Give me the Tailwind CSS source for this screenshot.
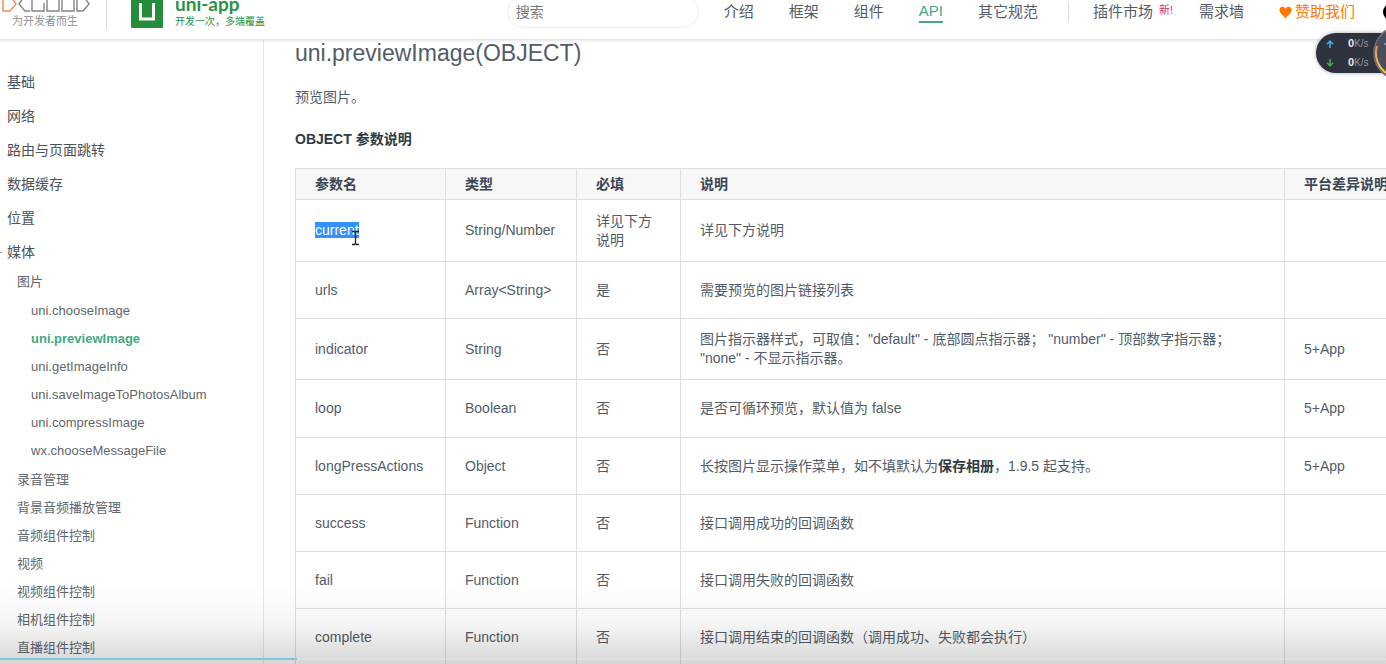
<!DOCTYPE html>
<html lang="zh-CN">
<head>
<meta charset="utf-8">
<title>uni.previewImage(OBJECT)</title>
<script src="https://cdn.jsdelivr.net/npm/@tailwindcss/browser@4"></script>
</head>
<body class="relative flex h-screen flex-col overflow-hidden bg-white font-['Liberation_Sans','Noto_Sans_CJK_SC',sans-serif] text-sm text-[#525c69]">

<header class="relative z-10 -mt-4 flex h-14 shrink-0 items-center border-b border-[#e6e6e6] bg-white pt-px shadow-[0_1px_3px_rgba(0,0,0,0.1)]">
  <a href="#" class="flex w-[107px] flex-col border-r border-[#d8d8d8] text-[11px] leading-[18px] text-[#8f8f8f]" aria-label="DCloud">
    <svg class="ml-[2px] h-[18px] w-[90px]" viewBox="0 0 90 18" fill="none" stroke="#858585" stroke-width="1.400">
      <path d="M1 1h7l6 9-6 7H1z" stroke="#f08a4b"/>
      <path d="M28 1h-5l-6 9 6 7h5M30 1v16h12V9M45 1h12v16H45zM60 1v16h12V1M75 1v16h6l6-7-6-9z"/>
    </svg>
    <span class="pl-3 whitespace-nowrap">为开发者而生</span>
  </a>
  <a href="#" class="ml-6 flex items-center gap-3 text-[#2a9245]">
    <svg class="size-8" viewBox="0 0 32 32"><rect width="32" height="32" rx="1" fill="#238d3a"/><path d="M9.500 7v16h13V7" fill="none" stroke="#fff" stroke-width="3"/></svg>
    <span class="flex flex-col">
      <b class="font-['Lato','Open_Sans',sans-serif] text-[19px] leading-5">uni-app</b>
      <span class="text-[10px] leading-4 whitespace-nowrap">开发一次，多端覆盖</span>
    </span>
  </a>
  <input type="search" aria-label="搜索" placeholder="搜索" class="ml-auto h-8 w-[192px] rounded-full border border-[#eeeeee] bg-white px-2 text-sm text-[#555] placeholder:text-[#777]">
  <nav class="ml-[25px] flex shrink-0 items-center gap-[35px] pr-[31px] text-[15px] leading-5 whitespace-nowrap text-[#525c69]">
    <a href="#">介绍</a>
    <a href="#">框架</a>
    <a href="#">组件</a>
    <a href="#" class="border-b-2 border-[#42a983] leading-5 text-[#42a983]">API</a>
    <a href="#">其它规范</a>
    <span class="-ml-[5px] h-5 w-px bg-[#dddddd]"></span>
    <a href="#" class="-ml-[11px] flex gap-[6px]">插件市场<sup class="top-0 text-[11px] leading-4 text-[#d8345f]">新!</sup></a>
    <a href="#" class="-ml-[9px]">需求墙</a>
    <a href="#" class="flex items-center gap-[3px] text-[#ff7700]">
      <svg class="h-[13px] w-[13px]" viewBox="0 0 13 13" fill="#ff7700"><path d="M6.500 12.500C5.500 10.500.5 7.500.5 4 .5 2 1.800.8 3.500.8c1.300 0 2.400.7 3 2 .6-1.300 1.700-2 3-2 1.700 0 3 1.200 3 3.200 0 3.500-5 6.500-6 8.500z"/></svg>赞助我们</a>
  </nav>
</header>
<div class="absolute top-[3px] -right-[15px] z-10 size-[18px] rounded-full bg-black"></div>

<div class="flex min-h-0 flex-1">
  <aside class="w-[264px] shrink-0 overflow-hidden border-r border-[#e8e8e8] pt-[25px] text-[#4b5258]">
    <ul class="leading-[34px]">
      <li><a href="#" class="block pl-[7px]">基础</a></li>
      <li><a href="#" class="block pl-[7px]">网络</a></li>
      <li><a href="#" class="block pl-[7px]">路由与页面跳转</a></li>
      <li><a href="#" class="block pl-[7px]">数据缓存</a></li>
      <li><a href="#" class="block pl-[7px]">位置</a></li>
      <li>
        <a href="#" class="flex items-center gap-[5px]"><span class="h-px w-[2px] bg-[#999]"></span>媒体</a>
        <ul class="-mt-px pl-[17px] text-[13px] leading-7 text-[#5f666d]">
          <li><a href="#">图片</a>
            <ul class="py-px pl-[14px]">
              <li><a href="#">uni.chooseImage</a></li>
              <li><a href="#" class="font-bold text-[#42a983]">uni.previewImage</a></li>
              <li><a href="#">uni.getImageInfo</a></li>
              <li><a href="#">uni.saveImageToPhotosAlbum</a></li>
              <li><a href="#">uni.compressImage</a></li>
              <li><a href="#">wx.chooseMessageFile</a></li>
            </ul>
          </li>
          <li><a href="#">录音管理</a></li>
          <li><a href="#">背景音频播放管理</a></li>
          <li><a href="#">音频组件控制</a></li>
          <li><a href="#">视频</a></li>
          <li><a href="#">视频组件控制</a></li>
          <li><a href="#">相机组件控制</a></li>
          <li><a href="#">直播组件控制</a></li>
        </ul>
      </li>
    </ul>
  </aside>

  <main class="min-w-0 flex-1 overflow-hidden pl-[31px]">
    <h1 class="text-[23px] leading-[26px]">uni.previewImage(OBJECT)</h1>
    <p class="mt-[21px] leading-[20px]">预览图片。</p>
    <h2 class="mt-[22px] font-bold text-[#2f3a47]">OBJECT 参数说明</h2>
    <div class="-mr-6 mt-[19px]">
      <table class="w-full table-fixed border-collapse text-left leading-[19px] [&_td]:border [&_td]:border-[#dfdfdf] [&_td]:px-[19px] [&_th]:border [&_th]:border-[#dfdfdf] [&_th]:px-[19px] [&_th]:text-[#3a4554]">
        <colgroup><col class="w-[150px]"><col class="w-[131px]"><col class="w-[104px]"><col><col class="w-[125px]"></colgroup>
        <thead class="bg-[#f7f7f7]">
          <tr class="h-[31px]"><th>参数名</th><th>类型</th><th>必填</th><th>说明</th><th class="whitespace-nowrap">平台差异说明</th></tr>
        </thead>
        <tbody>
          <tr class="h-[62px]"><td><mark class="bg-[#3390ff] text-white">current</mark></td><td>String/Number</td><td>详见下方说明</td><td>详见下方说明</td><td></td></tr>
          <tr class="h-[57px]"><td>urls</td><td>Array&lt;String&gt;</td><td>是</td><td>需要预览的图片链接列表</td><td></td></tr>
          <tr class="h-[61px]"><td>indicator</td><td>String</td><td>否</td><td>图片指示器样式，可取值："default" - 底部圆点指示器； "number" - 顶部数字指示器；<br>"none" - 不显示指示器。</td><td>5+App</td></tr>
          <tr class="h-[58px]"><td>loop</td><td>Boolean</td><td>否</td><td>是否可循环预览，默认值为 false</td><td>5+App</td></tr>
          <tr class="h-[57px]"><td>longPressActions</td><td>Object</td><td>否</td><td>长按图片显示操作菜单，如不填默认为<strong class="text-[#2f3a47]">保存相册</strong>，1.9.5 起支持。</td><td>5+App</td></tr>
          <tr class="h-[57px]"><td>success</td><td>Function</td><td>否</td><td>接口调用成功的回调函数</td><td></td></tr>
          <tr class="h-[57px]"><td>fail</td><td>Function</td><td>否</td><td>接口调用失败的回调函数</td><td></td></tr>
          <tr class="h-[57px]"><td>complete</td><td>Function</td><td>否</td><td>接口调用结束的回调函数（调用成功、失败都会执行）</td><td></td></tr>
        </tbody>
      </table>
    </div>
  </main>
</div>

<!-- text cursor over the selected word -->
<svg class="absolute top-[230px] left-[351px] h-4 w-[9px]" viewBox="0 0 9 16" fill="none" stroke="#222" stroke-width="1.300"><path d="M1 1.500h2.500l1 1 1-1H8M4.500 2.500v11M1 14.500h2.500l1-1 1 1H8"/></svg>

<!-- network speed widget -->
<div class="absolute top-[33px] right-0 z-20 flex h-10 w-[70px] flex-col justify-center rounded-l-full bg-[#2d323d] pl-[10px] text-[11px] leading-[19px] text-[#9298a3] shadow-[0_0_4px_rgba(0,0,0,0.35)]">
  <div class="flex items-center gap-[14px]"><svg class="size-2" viewBox="0 0 8 8" fill="none" stroke="#3fa9f0" stroke-width="1.600"><path d="M4 8V1.500M1 4.200l3-3 3 3"/></svg><span><b class="text-[#e8e8e8]">0</b><span class="text-[10px]">K/s</span></span></div>
  <div class="flex items-center gap-[14px]"><svg class="size-2" viewBox="0 0 8 8" fill="none" stroke="#35b04a" stroke-width="1.600"><path d="M4 0v6.500M1 3.800l3 3 3-3"/></svg><span><b class="text-[#e8e8e8]">0</b><span class="text-[10px]">K/s</span></span></div>
</div>
<svg class="absolute top-[24px] right-0 z-20 h-[58px] w-[13px]" viewBox="0 0 13 58">
  <defs><linearGradient id="arc" x1="0" y1="0" x2="0" y2="1"><stop offset="0" stop-color="#f08a5a"/><stop offset="1" stop-color="#f2cf4a"/></linearGradient></defs>
  <circle cx="28" cy="29" r="27" fill="#4a4f5c" stroke="#6b707c" stroke-width="1.500"/>
  <path d="M4 22A25 25 0 0 0 13 49" fill="none" stroke="url(#arc)" stroke-width="2"/>
  <path d="M11 20h2" stroke="#c9ccd2"/>
</svg>

<!-- player shade and progress -->
<div class="pointer-events-none absolute inset-x-0 bottom-0 z-20 h-20 bg-linear-to-b from-black/0 via-black/4 to-black/16"></div>
<div class="absolute inset-x-0 bottom-1 z-20 h-[2px] bg-white/10"><div class="h-full w-[297px] bg-[#7fc6de]"></div></div>
</body>
</html>
